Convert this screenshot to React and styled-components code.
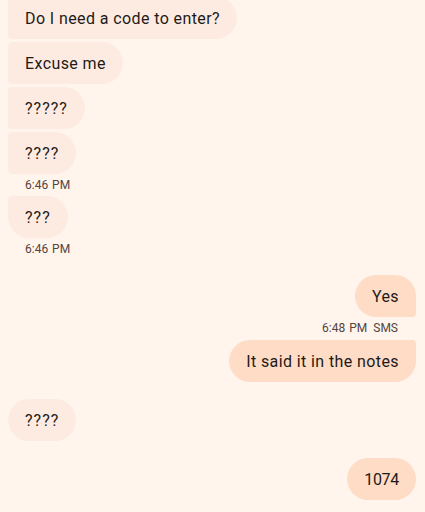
import React from "react";
import styled, { createGlobalStyle } from "styled-components";

const Global = createGlobalStyle`
  html, body {
    margin: 0;
    padding: 0;
    background: #fff5ed;
    overflow: hidden;
  }
  body {
    font-family: Roboto, "Noto Sans", sans-serif;
  }
`;

const Thread = styled.div`
  width: 425px;
  height: 512px;
  box-sizing: border-box;
  padding: 0 9px 0 8px;
  margin-top: -3px;
  display: flex;
  flex-direction: column;
  background: #fff5ed;
`;

const big = "21px";
const small = "4px";

const Bubble = styled.div`
  align-self: ${({ $out }) => ($out ? "flex-end" : "flex-start")};
  margin-top: ${({ $gap }) => $gap ?? 3}px;
  height: 42px;
  box-sizing: border-box;
  padding: 0 17px;
  display: flex;
  align-items: center;
  font-size: 16px;
  letter-spacing: ${({ $ls }) => $ls ?? 0.4}px;
  color: #1f1a17;
  background: ${({ $out }) => ($out ? "#fedcc6" : "#fdebe2")};
  border-radius: ${({ $r }) => $r};
  white-space: nowrap;
`;

const Stamp = styled.div`
  align-self: ${({ $out }) => ($out ? "flex-end" : "flex-start")};
  margin: 3px 18px 0 17px;
  height: 16px;
  line-height: 16px;
  font-size: 12px;
  color: #54443d;
  word-spacing: 1px;
`;

const Sms = styled.span`
  margin-left: 6px;
`;

const grouped = `${small} ${big} ${big} ${small}`;

export default function App() {
  return (
    <>
      <Global />
      <Thread>
        <Bubble $gap={0} $r={grouped}>Do I need a code to enter?</Bubble>
        <Bubble $r={grouped}>Excuse me</Bubble>
        <Bubble $r={grouped} $ls={1}>?????</Bubble>
        <Bubble $r={grouped} $ls={1}>????</Bubble>
        <Stamp>6:46 PM</Stamp>
        <Bubble $r={`${small} ${big} ${big} ${big}`} $ls={1}>???</Bubble>
        <Stamp>6:46 PM</Stamp>
        <Bubble $out $gap={18} $r={`${big} ${big} ${small} ${big}`}>Yes</Bubble>
        <Stamp $out>
          6:48 PM<Sms>SMS</Sms>
        </Stamp>
        <Bubble $out $gap={4} $r={`${big} ${small} ${big} ${big}`}>It said it in the notes</Bubble>
        <Bubble $gap={17} $r={big} $ls={1}>????</Bubble>
        <Bubble $out $gap={17} $r={big} $ls={-0.3}>1074</Bubble>
      </Thread>
    </>
  );
}
